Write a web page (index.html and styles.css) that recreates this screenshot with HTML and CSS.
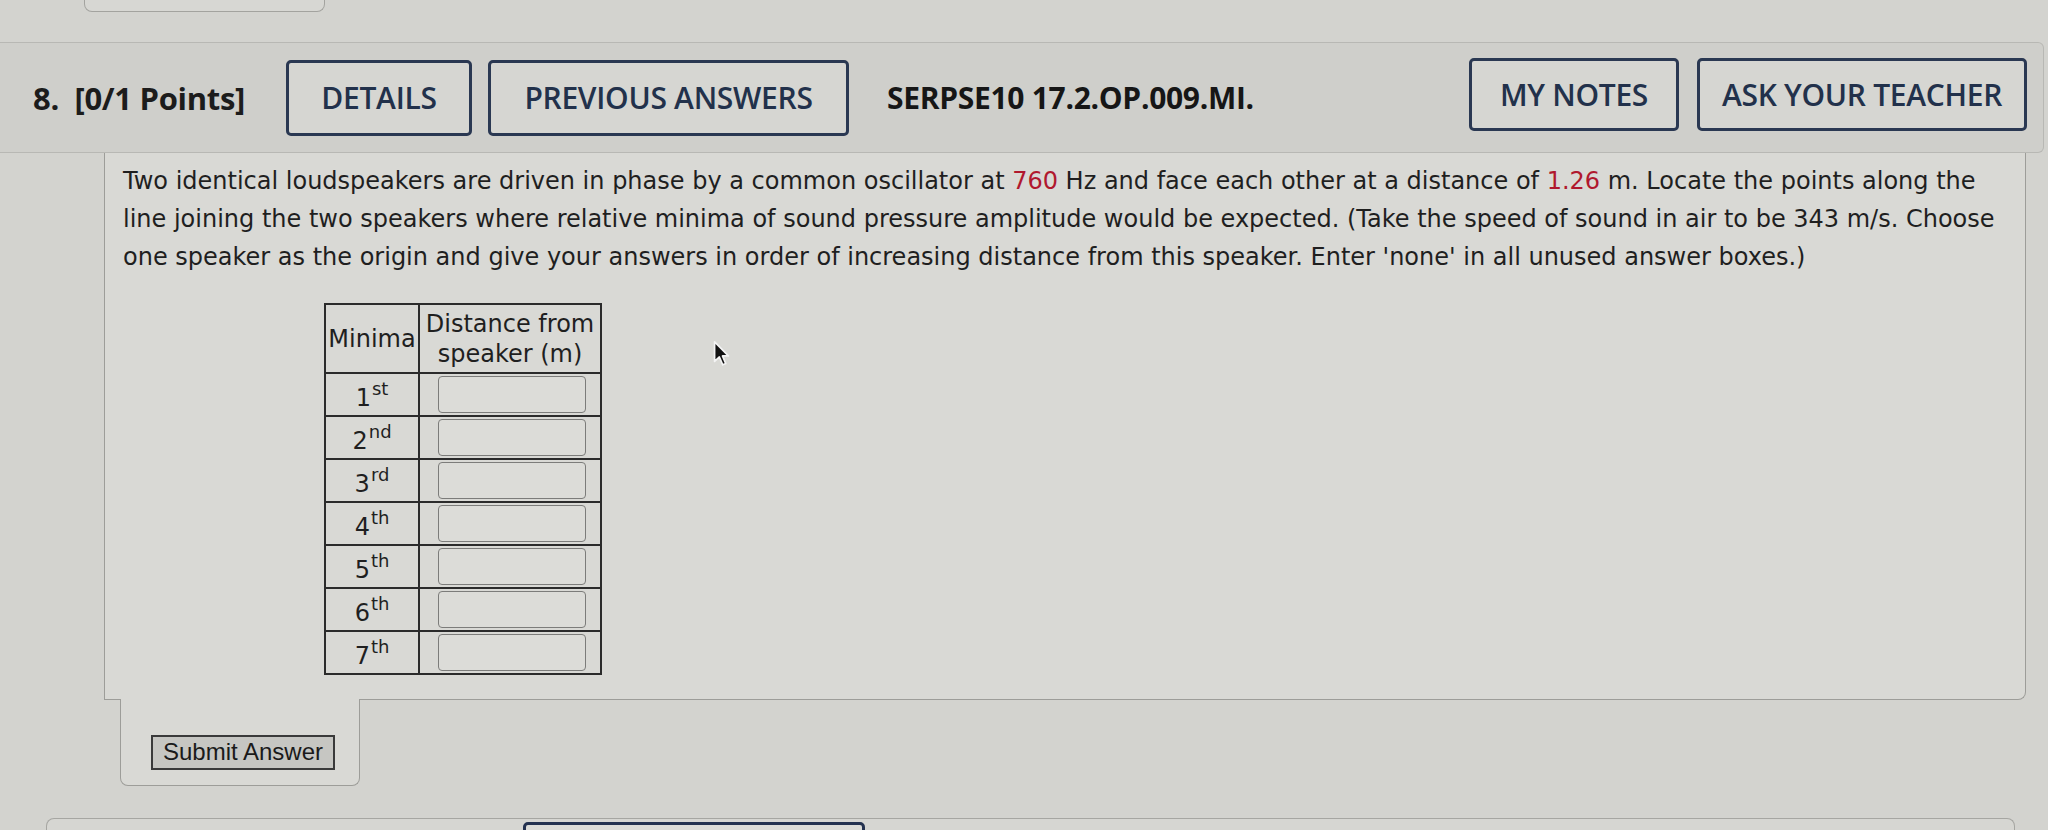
FILE: index.html
```html
<!DOCTYPE html>
<html lang="en">
<head>
<meta charset="utf-8">
<title>Question 8</title>
<link rel="stylesheet" href="styles.css">
</head>
<body>
<div class="prev-tail"></div>

<section class="question">
  <header class="q-head">
    <span class="q-num">8.&nbsp; [0/1 Points]</span>
    <span class="btn btn-details">DETAILS</span>
    <span class="btn btn-prev">PREVIOUS ANSWERS</span>
    <span class="q-code">SERPSE10 17.2.OP.009.MI.</span>
    <span class="spacer"></span>
    <span class="btn btn-notes">MY NOTES</span>
    <span class="btn btn-ask">ASK YOUR TEACHER</span>
  </header>

  <div class="q-body">
    <p class="q-text">Two identical loudspeakers are driven in phase by a common oscillator at <span class="val">760</span> Hz and face each other at a distance of <span class="val">1.26</span> m. Locate the points along the<br>line joining the two speakers where relative minima of sound pressure amplitude would be expected. (Take the speed of sound in air to be 343 m/s. Choose<br>one speaker as the origin and give your answers in order of increasing distance from this speaker. Enter 'none' in all unused answer boxes.)</p>

    <table class="ans-table">
      <tr>
        <th class="col-min">Minima</th>
        <th class="col-dist">Distance from<br>speaker (m)</th>
      </tr>
      <tr><td class="ord">1<sup>st</sup></td><td class="box"><span class="ans"></span></td></tr>
      <tr><td class="ord">2<sup>nd</sup></td><td class="box"><span class="ans"></span></td></tr>
      <tr><td class="ord">3<sup>rd</sup></td><td class="box"><span class="ans"></span></td></tr>
      <tr><td class="ord">4<sup>th</sup></td><td class="box"><span class="ans"></span></td></tr>
      <tr><td class="ord">5<sup>th</sup></td><td class="box"><span class="ans"></span></td></tr>
      <tr><td class="ord">6<sup>th</sup></td><td class="box"><span class="ans"></span></td></tr>
      <tr><td class="ord">7<sup>th</sup></td><td class="box"><span class="ans"></span></td></tr>
    </table>
  </div>

  <div class="submit-tab">
    <span class="submit-btn">Submit Answer</span>
  </div>
</section>

<div class="next-q">
  <span class="next-btn"></span>
</div>

<svg class="cursor" width="17" height="28" viewBox="0 0 16 26">
  <path d="M1.5 1.5 L1.5 20 L6 15.8 L9.2 23.2 L12 22 L8.9 14.8 L14.5 14.8 Z" fill="#111" stroke="#f4f4f4" stroke-width="1.6" stroke-linejoin="round"/>
</svg>
</body>
</html>
```

FILE: styles.css
```css
html, body {
  margin: 0;
  padding: 0;
}

body {
  position: relative;
  width: 2048px;
  height: 830px;
  overflow: hidden;
  background: #d3d3cf;
  font-family: "DejaVu Sans", Verdana, sans-serif;
  color: #1f1f1f;
}

.prev-tail {
  box-sizing: border-box;
  margin-left: 84px;
  width: 241px;
  height: 12px;
  border: 1.5px solid #a3a39f;
  border-top: none;
  border-radius: 0 0 8px 8px;
  background: #d7d7d3;
}

.question {
  margin-top: 30px;
}

.q-head {
  box-sizing: border-box;
  height: 111px;
  margin-right: 4px;
  padding: 0 16px 0 33px;
  display: flex;
  align-items: center;
  background: #cfcfcb;
  border: 1.5px solid #b8b8b4;
  border-left: none;
  border-radius: 0 6px 6px 0;
  font-family: "Open Sans", "DejaVu Sans", sans-serif;
}

.q-num {
  width: 253px;
  flex: none;
  font-size: 31px;
  font-weight: 700;
  color: #1c1c1c;
  letter-spacing: -0.3px;
}

.btn {
  box-sizing: border-box;
  flex: none;
  height: 76px;
  display: flex;
  align-items: center;
  justify-content: center;
  border: 3px solid #2a3852;
  border-radius: 5px;
  background: #d6d6d2;
  font-size: 30px;
  font-weight: 600;
  color: #22314b;
  letter-spacing: -0.3px;
}

.btn-details { width: 186px; }
.btn-prev { width: 361px; margin-left: 16px; }

.q-code {
  margin-left: 38px;
  font-size: 30px;
  font-weight: 700;
  color: #161616;
  letter-spacing: -0.3px;
}

.spacer { flex: 1; }

.btn-notes { width: 210px; height: 73px; margin-top: -6px; }
.btn-ask { width: 330px; height: 73px; margin-left: 18px; margin-top: -6px; }

.q-body {
  margin-left: 104px;
  margin-right: 22px;
  padding: 9px 30px 24px 18px;
  background: #d9d9d5;
  border: 1.5px solid #9d9d99;
  border-top: none;
  border-radius: 0 0 8px 0;
}

.q-text {
  margin: 0;
  font-size: 24px;
  line-height: 38px;
  white-space: nowrap;
  color: #1f1f1f;
}

.val { color: #b0182e; }

.ans-table {
  margin: 27px 0 0 201px;
  border-collapse: collapse;
  font-size: 24px;
  color: #1f1f1f;
}

.ans-table th,
.ans-table td {
  border: 2px solid #2b2b2b;
  padding: 0 2px;
  text-align: center;
  vertical-align: middle;
}

.ans-table th {
  height: 67px;
  font-weight: normal;
  line-height: 30px;
}

.ans-table .col-min { width: 88px; }
.ans-table .col-dist { width: 176px; }

.ans-table td {
  height: 41px;
  line-height: 24px;
}

.ans-table td.ord {
  padding: 6px 2px 0;
  box-sizing: border-box;
}

.ord sup {
  font-size: 18px;
  vertical-align: 11px;
  line-height: 0;
  margin-left: 1px;
}

.ans-table td.box { padding: 0 14px 0 18px; }

.ans {
  box-sizing: border-box;
  display: block;
  width: 148px;
  height: 37px;
  border: 1.5px solid #7c7c7a;
  border-radius: 4px;
  background: #dcdcd8;
}

.submit-tab {
  box-sizing: border-box;
  width: 240px;
  height: 87px;
  margin: -1.5px 0 0 120px;
  padding: 36px 0 0 30px;
  background: #d9d9d5;
  border: 1.5px solid #9d9d99;
  border-top: none;
  border-radius: 0 0 8px 8px;
}

.submit-btn {
  box-sizing: border-box;
  display: inline-flex;
  align-items: center;
  justify-content: center;
  width: 184px;
  height: 35px;
  border: 2px solid #3a3a3a;
  background: #c6c6c2;
  font-family: "Liberation Sans", Arial, sans-serif;
  font-size: 24px;
  color: #1a1a1a;
}

.next-q {
  box-sizing: border-box;
  height: 60px;
  margin: 32px 33px 0 46px;
  padding: 3px 0 0 476px;
  background: #d6d6d2;
  border: 1.5px solid #a6a6a2;
  border-bottom: none;
  border-radius: 8px 8px 0 0;
}

.next-btn {
  box-sizing: border-box;
  display: block;
  width: 342px;
  height: 40px;
  border: 3px solid #243250;
  border-radius: 5px;
  background: #dcdcd8;
}

.cursor {
  position: absolute;
  left: 713px;
  top: 340px;
}
```
